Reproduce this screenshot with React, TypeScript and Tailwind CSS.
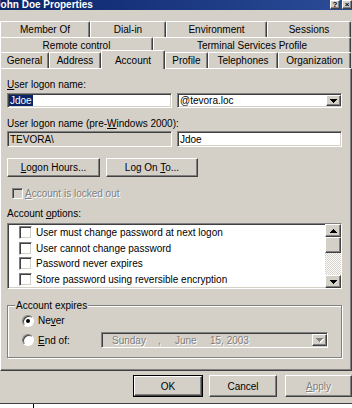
import React from "react";

const sunken =
  "border border-t-[#808080] border-l-[#808080] border-b-white border-r-white shadow-[inset_1px_1px_0_#404040,inset_-1px_-1px_0_#d4d0c8]";
const raised =
  "border border-t-white border-l-white border-b-[#404040] border-r-[#404040] shadow-[inset_-1px_-1px_0_#808080]";
const grayText = "text-[#808080] [text-shadow:1px_1px_0_#ffffff]";

const Down: React.FC<{ gray?: boolean }> = ({ gray }) => (
  <svg width="7" height="4" viewBox="0 0 7 4" className={gray ? "drop-shadow-[1px_1px_0_#fff]" : ""}>
    <path d="M0 0h7v1h-1v1h-1v1h-1v1h-1v-1h-1v-1h-1v-1h-1z" fill={gray ? "#808080" : "#000"} />
  </svg>
);

const Up: React.FC = () => (
  <svg width="7" height="4" viewBox="0 0 7 4">
    <path d="M0 4h7v-1h-1v-1h-1v-1h-1v-1h-1v1h-1v1h-1v1h-1z" fill="#000" />
  </svg>
);

const Tab: React.FC<{ label: string; w: string }> = ({ label, w }) => (
  <div
    className={`${w} h-full flex items-center justify-center border-t border-l border-r border-t-white border-l-white border-r-[#404040] rounded-tr-[2px] shadow-[inset_-1px_0_0_#808080] whitespace-nowrap`}
  >
    {label}
  </div>
);

const Check: React.FC<{ label: string }> = ({ label }) => (
  <div className="h-[15.5px] flex items-center gap-[4px] pl-[11px] whitespace-nowrap">
    <div className={`w-[13px] h-[13px] bg-white ${sunken}`} />
    <span>{label}</span>
  </div>
);

const Radio: React.FC<{ on?: boolean }> = ({ on }) => (
  <div className="w-[12px] h-[12px] rounded-full border border-t-[#808080] border-l-[#808080] border-b-white border-r-white bg-white flex items-center justify-center shadow-[inset_1px_1px_0_#404040]">
    {on && <div className="w-[4px] h-[4px] rounded-full bg-black" />}
  </div>
);

export default function App() {
  return (
    <div className="w-[352px] h-[408px] overflow-hidden bg-[#d4d0c8] text-black text-[10px] font-['Liberation_Sans',Arial,sans-serif]">
      <div className="h-[404px] flex flex-col border-b border-[#404040]">
        {/* title bar */}
        <div className="h-[10px] flex bg-linear-to-r from-[#0a246a] to-[#2c4c98] text-white">
          <span className="-ml-[5px] font-bold leading-[10px] whitespace-nowrap">John Doe Properties</span>
          <div className="ml-auto flex gap-[2px] text-black font-bold">
            <div className={`w-[10px] h-[9px] bg-[#d4d0c8] ${raised} flex items-center justify-center text-[8px] leading-none`}>?</div>
            <div className={`w-[10px] h-[9px] bg-[#d4d0c8] ${raised} flex items-center justify-center text-[8px] leading-none`}>×</div>
          </div>
        </div>

        {/* tabs */}
        <div className="mt-[11px] flex flex-col">
          <div className="h-[16px] flex">
            <Tab label="Member Of" w="w-[90px]" />
            <Tab label="Dial-in" w="w-[76px]" />
            <Tab label="Environment" w="w-[101px]" />
            <Tab label="Sessions" w="w-[84px]" />
          </div>
          <div className="h-[15px] flex">
            <Tab label="Remote control" w="w-[153px]" />
            <Tab label="Terminal Services Profile" w="w-[198px]" />
          </div>
          <div className="h-[16px] flex items-end">
            <Tab label="General" w="w-[49px]" />
            <Tab label="Address" w="w-[52px]" />
            <div className="relative z-10 w-[64px] h-[19px] -mb-px bg-[#d4d0c8] flex items-start pt-[2px] justify-center border-t border-l border-r border-t-white border-l-white border-r-[#404040] rounded-tr-[2px] shadow-[inset_-1px_0_0_#808080]">
              Account
            </div>
            <Tab label="Profile" w="w-[43px]" />
            <Tab label="Telephones" w="w-[70px]" />
            <Tab label="Organization" w="w-[73px]" />
          </div>
        </div>

        {/* page */}
        <div className="h-[303px] flex flex-col pl-[6px] border border-t-white border-l-white border-b-[#404040] border-r-[#404040] shadow-[inset_-1px_-1px_0_#808080]">
          <div className="mt-[9px] h-[13px] leading-[13px]">
            <span className="underline">U</span>ser logon name:
          </div>
          <div className="mt-[2px] flex gap-[5px]">
            <div className={`w-[165px] h-[15px] bg-white ${sunken} flex items-center pl-[1px]`}>
              <span className="bg-[#0a246a] text-white px-px leading-[11px]">Jdoe</span>
            </div>
            <div className={`w-[165px] h-[15px] bg-white ${sunken} flex items-center pl-[2px]`}>
              <span>@tevora.loc</span>
              <div className={`ml-auto w-[15px] h-[11px] bg-[#d4d0c8] ${raised} flex items-center justify-center`}>
                <Down />
              </div>
            </div>
          </div>

          <div className="mt-[9px] h-[13px] leading-[13px] whitespace-nowrap">
            User logon name (pre-<span className="underline">W</span>indows 2000):
          </div>
          <div className="mt-[1px] flex gap-[5px]">
            <div className={`w-[165px] h-[16px] bg-[#d4d0c8] ${sunken} flex items-center pl-[2px]`}>TEVORA\</div>
            <div className={`w-[165px] h-[16px] bg-white ${sunken} flex items-center pl-[2px]`}>Jdoe</div>
          </div>

          <div className="mt-[11px] flex gap-[6px]">
            <div className={`w-[93px] h-[19px] ${raised} flex items-center justify-center`}>
              <span>
                <span className="underline">L</span>ogon Hours...
              </span>
            </div>
            <div className={`w-[92px] h-[19px] ${raised} flex items-center justify-center`}>
              <span>
                Log On <span className="underline">T</span>o...
              </span>
            </div>
          </div>

          <div className="mt-[10px] h-[13px] flex items-center pl-[5px] gap-[2px]">
            <div className={`w-[11px] h-[11px] bg-[#d4d0c8] ${sunken}`} />
            <span className={grayText}>
              <span className="underline">A</span>ccount is locked out
            </span>
          </div>

          <div className="mt-[7px] h-[13px] leading-[13px]">
            Account <span className="underline">o</span>ptions:
          </div>
          <div className={`mt-[3px] w-[335px] h-[66px] bg-white ${sunken} flex`}>
            <div className="flex-1 pt-[1px] flex flex-col">
              <Check label="User must change password at next logon" />
              <Check label="User cannot change password" />
              <Check label="Password never expires" />
              <Check label="Store password using reversible encryption" />
            </div>
            <div className="w-[16px] flex flex-col">
              <div className={`h-[13px] bg-[#d4d0c8] ${raised} flex items-center justify-center`}>
                <Up />
              </div>
              <div className={`h-[16px] bg-[#d4d0c8] ${raised}`} />
              <div className="flex-1 bg-[repeating-conic-gradient(#ffffff_0%_25%,#d4d0c8_0%_50%)] bg-size-[2px_2px]" />
              <div className={`h-[13px] bg-[#d4d0c8] ${raised} flex items-center justify-center`}>
                <Down />
              </div>
            </div>
          </div>

          <fieldset className="mt-[10px] w-[335px] min-w-0 border border-[#808080] shadow-[inset_1px_1px_0_#fff,1px_1px_0_#fff]">
            <legend className="ml-[7px] px-px h-[13px] leading-[13px] bg-[#d4d0c8]">Account expires</legend>
            <div className="pl-[14px] pb-[9px] flex flex-col">
              <div className="mt-[2px] h-[13px] flex items-center gap-[4px]">
                <Radio on />
                <span>
                  Ne<span className="underline">v</span>er
                </span>
              </div>
              <div className="mt-[5px] h-[16px] flex items-center">
                <div className="w-[79px] flex items-center gap-[4px]">
                  <Radio />
                  <span>
                    <span className="underline">E</span>nd of:
                  </span>
                </div>
                <div className={`w-[227px] h-[16px] ${sunken} flex items-center pl-[10px] ${grayText}`}>
                  <span className="w-[46px]">Sunday</span>
                  <span className="w-[17px]">,</span>
                  <span className="w-[35px]">June</span>
                  <span>15, 2003</span>
                  <div className={`ml-auto w-[15px] h-[12px] ${raised} flex items-center justify-center`}>
                    <Down gray />
                  </div>
                </div>
              </div>
            </div>
          </fieldset>
        </div>

        {/* dialog buttons */}
        <div className="pt-[4px] flex pl-[133px]">
          <div className="w-[70px] h-[22px] border border-black flex">
            <div className={`flex-1 ${raised} flex items-center justify-center`}>OK</div>
          </div>
          <div className={`ml-[6px] w-[68px] h-[22px] ${raised} flex items-center justify-center`}>Cancel</div>
          <div className={`ml-[8px] w-[67px] h-[22px] ${raised} flex items-center justify-center ${grayText}`}>
            <span>
              <span className="underline">A</span>pply
            </span>
          </div>
        </div>
      </div>
      <div className="h-[4px] bg-white flex">
        <div className="ml-[33px] w-px h-full bg-black" />
      </div>
    </div>
  );
}
